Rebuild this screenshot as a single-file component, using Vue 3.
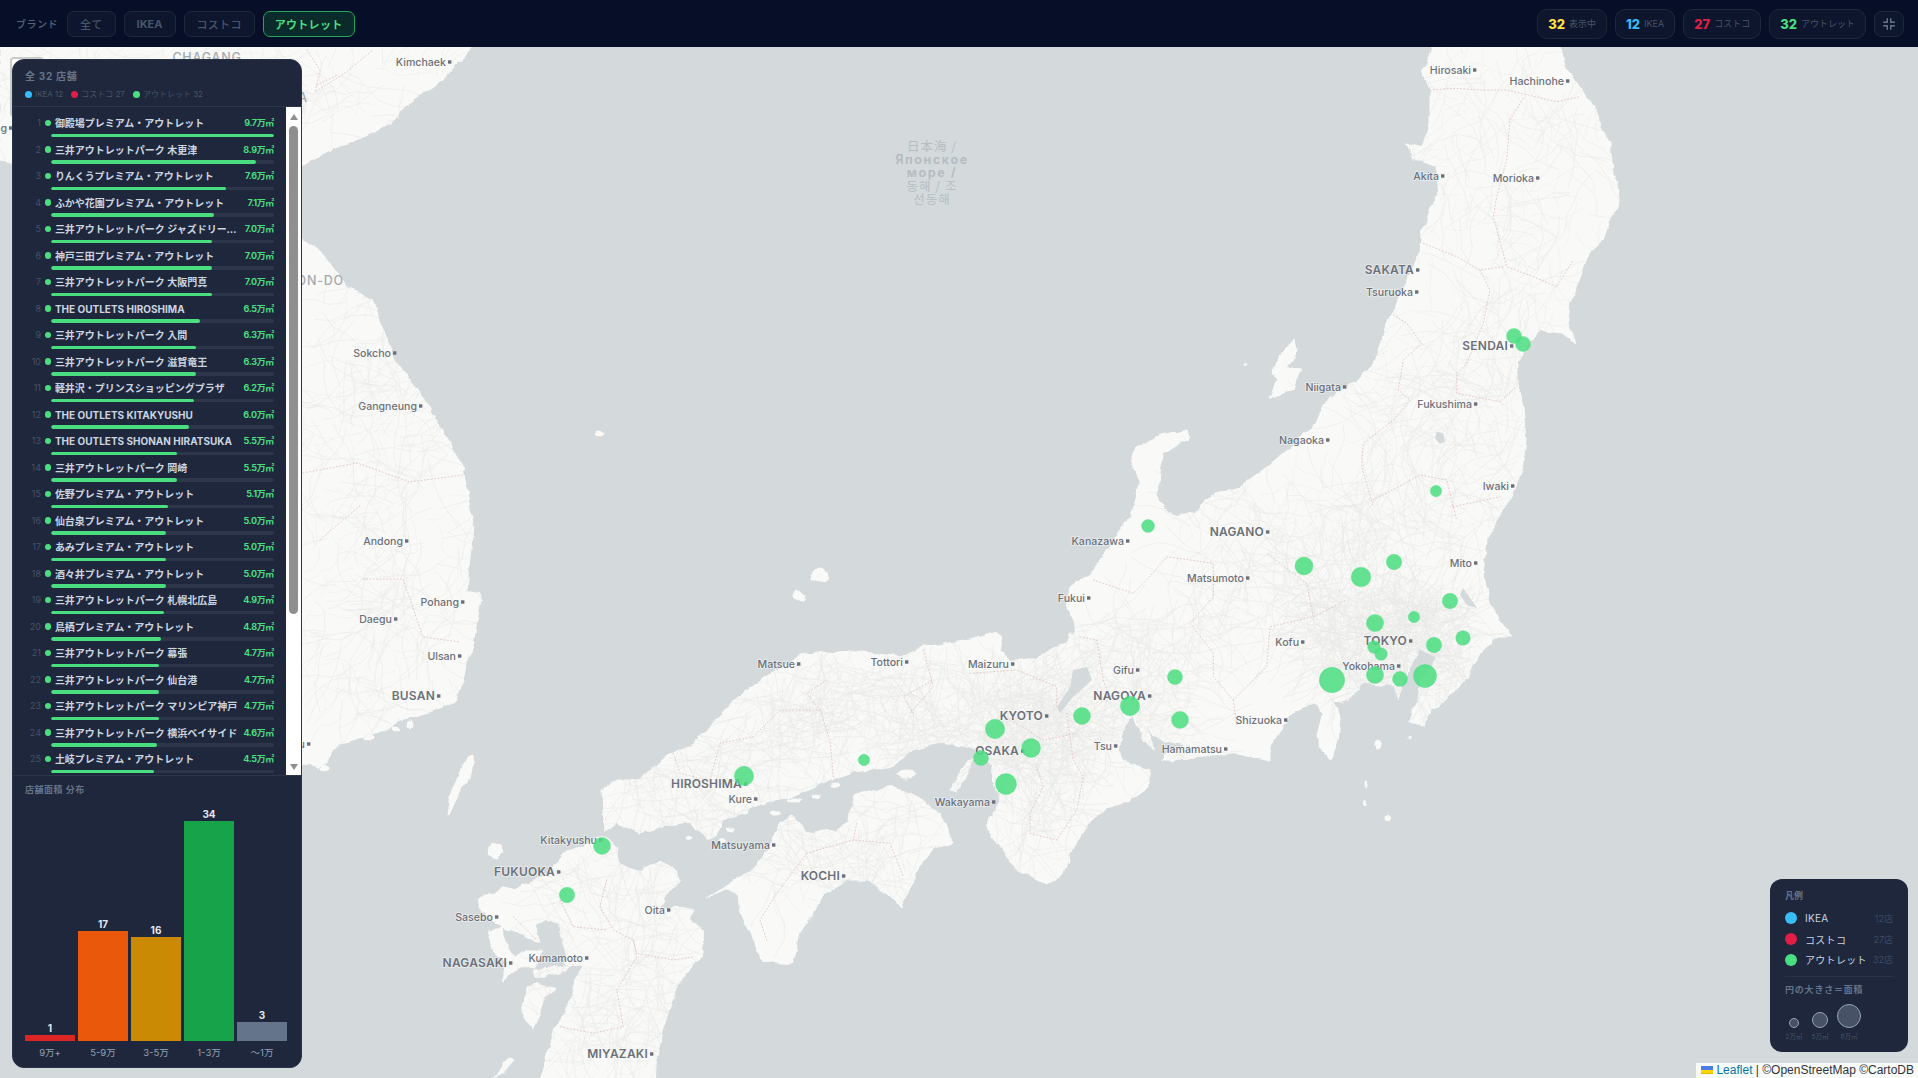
<template>
  <div class="page">
    <header class="topbar">
      <div class="filters">
        <span class="filter-label">ブランド</span>
        <button v-for="b in brands" :key="b" class="filter-btn" :class="{ active: b === activeBrand }">{{ b }}</button>
      </div>
      <div class="stats">
        <div v-for="s in stats" :key="s.label" class="stat">
          <b :class="s.cls">{{ s.num }}</b>
          <span>{{ s.label }}</span>
        </div>
        <button class="icon-btn">
          <svg width="14" height="14" viewBox="0 0 24 24" fill="none" stroke="#64748b" stroke-width="2.6">
            <path d="M2 9h7V2M22 9h-7V2M2 15h7v7M22 15h-7v7" />
          </svg>
        </button>
      </div>
    </header>

    <main class="map">
      <svg class="map-svg" viewBox="0 47 1918 1031" xmlns="http://www.w3.org/2000/svg">
        <defs>
          <clipPath id="land-clip">
            <path v-for="(d, i) in land" :key="i" :d="d" />
          </clipPath>
          <filter id="coast" filterUnits="userSpaceOnUse" x="0" y="0" width="1918" height="1078" color-interpolation-filters="sRGB">
            <feTurbulence type="fractalNoise" baseFrequency="0.07" numOctaves="3" seed="4" result="n" />
            <feDisplacementMap in="SourceGraphic" in2="n" scale="7" xChannelSelector="R" yChannelSelector="G" />
          </filter>
        </defs>
        <rect x="0" y="0" width="1918" height="1078" fill="#d4dadc" />
        <g filter="url(#coast)">
          <path v-for="(d, i) in land" :key="'l' + i" :d="d" class="land" />
          <ellipse v-for="(e, i) in islets" :key="'e' + i" :cx="e[0]" :cy="e[1]" :rx="e[2]" :ry="e[3]" class="islet" />
        </g>
        <g clip-path="url(#land-clip)">
          <path :d="roads" class="roads" />
          <path :d="majorRoads" class="roads-major" />
          <path :d="borders" class="borders" />
        </g>
        <path v-for="(d, i) in lakes" :key="'k' + i" :d="d" class="lake" />

        <g class="sea-label">
          <text x="932" y="151">日本海 /</text>
          <text x="932" y="164" class="ru">Японское</text>
          <text x="932" y="177" class="ru">море /</text>
          <text x="932" y="191">동해 / 조</text>
          <text x="932" y="204">선동해</text>
        </g>
        <text x="207" y="62" class="region">CHAGANG</text>
        <text x="308" y="102" class="region end">HAMGYONGA</text>
        <text x="344" y="285" class="region end">GANGWON-DO</text>

        <g v-for="p in places" :key="p[0]">
          <text :x="p[1]" :y="p[2] + 4" class="place" :class="{ caps: p[0] === p[0].toUpperCase() }">{{ p[0] }}</text>
          <rect :x="p[1] + 2" :y="p[2] - 1.7" width="3.4" height="3.4" class="place-dot" />
        </g>

        <circle v-for="(m, i) in markers" :key="'m' + i" :cx="m[0]" :cy="m[1]" :r="m[2]" class="marker" />
      </svg>

      <div class="zoom-box"></div>

      <aside class="panel">
        <div class="panel-head">
          <div class="panel-title">全 32 店舗</div>
          <div class="panel-legend">
            <span><i class="dot ikea"></i>IKEA 12</span>
            <span><i class="dot costco"></i>コストコ 27</span>
            <span><i class="dot outlet"></i>アウトレット 32</span>
          </div>
        </div>
        <div class="list-wrap">
          <div class="list">
            <div v-for="(r, i) in rows" :key="r.name" class="row">
              <div class="row-top">
                <span class="rank">{{ i + 1 }}</span>
                <i class="row-dot"></i>
                <span class="name">{{ r.name }}</span>
                <span class="value">{{ r.area.toFixed(1) }}万㎡</span>
              </div>
              <div class="track">
                <div class="fill" :style="{ width: (r.area / 9.7) * 100 + '%' }"></div>
              </div>
            </div>
          </div>
          <div class="scrollbar">
            <i class="arrow up"></i>
            <div class="scroll-track"><div class="thumb"></div></div>
            <i class="arrow down"></i>
          </div>
        </div>
        <div class="chart">
          <div class="chart-title">店舗面積 分布</div>
          <div class="bars">
            <div v-for="b in buckets" :key="b.label" class="bar-col">
              <span class="bar-num">{{ b.count }}</span>
              <div class="bar" :class="b.cls" :style="{ height: b.count * 6.47 + 'px' }"></div>
              <span class="bar-label">{{ b.label }}</span>
            </div>
          </div>
        </div>
      </aside>

      <aside class="legend">
        <div class="legend-title">凡例</div>
        <div v-for="l in legend" :key="l.name" class="legend-row">
          <i class="legend-dot" :class="l.cls"></i>
          <span class="legend-name">{{ l.name }}</span>
          <span class="legend-count">{{ l.count }}店</span>
        </div>
        <div class="legend-sub">円の大きさ＝面積</div>
        <div class="sizes">
          <div v-for="s in sizes" :key="s.label" class="size">
            <i class="size-circle" :class="s.cls"></i>
            <span>{{ s.label }}</span>
          </div>
        </div>
      </aside>

      <div class="attribution"><svg width="12" height="8" viewBox="0 0 12 8"><rect width="12" height="4" fill="#4c7be1" /><rect y="4" width="12" height="3" fill="#ffd500" /><rect y="7" width="12" height="1" fill="#e0bc00" /></svg> <a>Leaflet</a> | ©OpenStreetMap ©CartoDB</div>
    </main>
  </div>
</template>

<script setup>
const activeBrand = 'アウトレット'
const brands = ['全て', 'IKEA', 'コストコ', 'アウトレット']

const stats = [
  { num: 32, label: '表示中', cls: 'yellow' },
  { num: 12, label: 'IKEA', cls: 'blue' },
  { num: 27, label: 'コストコ', cls: 'red' },
  { num: 32, label: 'アウトレット', cls: 'green' }
]

const rows = [
  { name: '御殿場プレミアム・アウトレット', area: 9.7 },
  { name: '三井アウトレットパーク 木更津', area: 8.9 },
  { name: 'りんくうプレミアム・アウトレット', area: 7.6 },
  { name: 'ふかや花園プレミアム・アウトレット', area: 7.1 },
  { name: '三井アウトレットパーク ジャズドリーム長島', area: 7.0 },
  { name: '神戸三田プレミアム・アウトレット', area: 7.0 },
  { name: '三井アウトレットパーク 大阪門真', area: 7.0 },
  { name: 'THE OUTLETS HIROSHIMA', area: 6.5 },
  { name: '三井アウトレットパーク 入間', area: 6.3 },
  { name: '三井アウトレットパーク 滋賀竜王', area: 6.3 },
  { name: '軽井沢・プリンスショッピングプラザ', area: 6.2 },
  { name: 'THE OUTLETS KITAKYUSHU', area: 6.0 },
  { name: 'THE OUTLETS SHONAN HIRATSUKA', area: 5.5 },
  { name: '三井アウトレットパーク 岡崎', area: 5.5 },
  { name: '佐野プレミアム・アウトレット', area: 5.1 },
  { name: '仙台泉プレミアム・アウトレット', area: 5.0 },
  { name: 'あみプレミアム・アウトレット', area: 5.0 },
  { name: '酒々井プレミアム・アウトレット', area: 5.0 },
  { name: '三井アウトレットパーク 札幌北広島', area: 4.9 },
  { name: '鳥栖プレミアム・アウトレット', area: 4.8 },
  { name: '三井アウトレットパーク 幕張', area: 4.7 },
  { name: '三井アウトレットパーク 仙台港', area: 4.7 },
  { name: '三井アウトレットパーク マリンピア神戸', area: 4.7 },
  { name: '三井アウトレットパーク 横浜ベイサイド', area: 4.6 },
  { name: '土岐プレミアム・アウトレット', area: 4.5 }
]

const buckets = [
  { label: '9万+', count: 1, cls: 'b-red' },
  { label: '5-9万', count: 17, cls: 'b-orange' },
  { label: '3-5万', count: 16, cls: 'b-amber' },
  { label: '1-3万', count: 34, cls: 'b-green' },
  { label: '〜1万', count: 3, cls: 'b-slate' }
]

const legend = [
  { name: 'IKEA', count: 12, cls: 'ikea' },
  { name: 'コストコ', count: 27, cls: 'costco' },
  { name: 'アウトレット', count: 32, cls: 'outlet' }
]

const sizes = [
  { label: '2万㎡', cls: 's1' },
  { label: '5万㎡', cls: 's2' },
  { label: '8万㎡', cls: 's3' }
]

// x, y, r of each store on the map
const markers = [
  [1436, 491, 5.7], [1304, 566, 9], [1361, 577, 9.8], [1394, 562, 7.7], [1450, 601, 7.7],
  [1375, 623, 8.6], [1414, 617, 5.7], [1434, 645, 7.7], [1463, 638, 7.3], [1374, 647, 6.3],
  [1381, 654, 6.3], [1332, 680, 12.7], [1375, 675, 8.6], [1400, 679, 7.5], [1425, 676, 11.5],
  [1514, 336, 7.5], [1523, 344, 7.5], [1148, 526, 6.5], [1175, 677, 7.5], [1130, 706, 9.7],
  [1180, 720, 8.5], [1082, 716, 8.5], [995, 729, 9.7], [1031, 748, 9.5], [981, 758, 7.5],
  [1006, 784, 10.5], [744, 776, 9.7], [864, 760, 5.7], [602, 846, 8.5], [567, 895, 7.7]
]

// label, right end of text, y of the square
const places = [
  ['Kimchaek', 446, 62], ['Hirosaki', 1471, 70], ['Hachinohe', 1564, 81], ['Akita', 1439, 176],
  ['Morioka', 1534, 178], ['SAKATA', 1414, 270], ['Tsuruoka', 1413, 292], ['SENDAI', 1508, 346],
  ['Niigata', 1341, 387], ['Fukushima', 1472, 404], ['Nagaoka', 1324, 440], ['Iwaki', 1509, 486],
  ['Kanazawa', 1124, 541], ['NAGANO', 1264, 532], ['Matsumoto', 1244, 578], ['Fukui', 1085, 598],
  ['Kofu', 1299, 642], ['Maizuru', 1009, 664], ['Gifu', 1134, 670], ['NAGOYA', 1146, 696],
  ['KYOTO', 1043, 716], ['OSAKA', 1019, 751], ['Tsu', 1112, 746], ['Shizuoka', 1282, 720],
  ['Hamamatsu', 1222, 749], ['Wakayama', 990, 802], ['TOKYO', 1407, 641], ['Yokohama', 1395, 666],
  ['Mito', 1472, 563], ['HIROSHIMA', 742, 784], ['Kure', 752, 799], ['Matsuyama', 770, 845],
  ['KOCHI', 840, 876], ['Oita', 665, 910], ['Kitakyushu', 597, 840], ['FUKUOKA', 555, 872],
  ['Sasebo', 493, 917], ['NAGASAKI', 507, 963], ['Kumamoto', 583, 958], ['MIYAZAKI', 648, 1054],
  ['Matsue', 795, 664], ['Tottori', 903, 662], ['Sokcho', 391, 353], ['Gangneung', 417, 406],
  ['Andong', 403, 541], ['Pohang', 459, 602], ['Daegu', 392, 619], ['Ulsan', 456, 656],
  ['BUSAN', 435, 696], ['Jinju', 305, 744], ['Hanggang', 7, 128]
]

// turns a flat list of screenshot-crop points into a closed path in page coordinates
function poly(ox, oy, sx, sy, pts) {
  let d = ''
  for (let i = 0; i < pts.length; i += 2) {
    d += (i ? 'L' : 'M') + (ox + pts[i] / sx).toFixed(1) + ' ' + (oy + pts[i + 1] / sy).toFixed(1)
  }
  return d + 'Z'
}
function line(ox, oy, sx, sy, pts) {
  return poly(ox, oy, sx, sy, pts).slice(0, -1)
}

const land = [
  // Honshu
  poly(0, 0, 1, 1, [
    1437, 30, 1558, 30, 1565, 67, 1583, 90, 1597, 113, 1602, 130, 1610, 143, 1613, 173, 1618, 187, 1619, 200,
    1612, 217, 1602, 240, 1587, 257, 1580, 277, 1572, 297, 1567, 323, 1575, 343, 1560, 333, 1540, 330, 1530, 340,
    1518, 363, 1518, 387, 1523, 407, 1526, 440, 1522, 470, 1512, 497, 1503, 510, 1487, 540, 1483, 573, 1490, 603,
    1507, 632, 1510, 637, 1497, 637, 1480, 650, 1467, 677, 1450, 697, 1430, 710, 1423, 727, 1410, 720, 1417, 700,
    1420, 680, 1432, 667, 1435, 657, 1420, 650, 1413, 660, 1405, 677, 1398, 700, 1393, 687, 1385, 684, 1363, 683,
    1350, 700, 1333, 702, 1340, 720, 1338, 740, 1332, 760, 1322, 753, 1318, 737, 1323, 713, 1315, 703, 1300, 707,
    1287, 720, 1270, 747, 1270, 760, 1253, 757, 1233, 753, 1193, 757, 1163, 762, 1170, 752, 1187, 745, 1160, 740,
    1153, 735, 1148, 722, 1152, 748, 1143, 740, 1133, 713, 1123, 730, 1117, 750, 1127, 763, 1150, 770, 1150, 787,
    1130, 800, 1107, 807, 1090, 823, 1073, 847, 1063, 873, 1047, 885, 1017, 870, 1007, 857, 987, 830, 990, 817,
    1000, 800, 997, 790, 990, 763, 980, 750, 970, 748, 943, 742, 913, 750, 887, 768, 860, 770, 837, 777,
    813, 787, 790, 797, 760, 803, 743, 813, 723, 820, 717, 837, 707, 837, 690, 823, 660, 827, 640, 833, 617, 823,
    607, 833, 603, 813, 602, 790, 613, 780, 637, 780, 667, 755, 693, 743, 717, 720, 743, 693, 762, 680, 800, 655,
    850, 650, 900, 657, 923, 647, 950, 643, 970, 640, 997, 632, 1003, 637, 1000, 650, 1010, 660, 1033, 660,
    1053, 647, 1067, 643, 1070, 633, 1077, 633, 1073, 620, 1067, 607, 1070, 587, 1090, 573, 1107, 550, 1130, 517,
    1140, 480, 1132, 465, 1135, 450, 1150, 440, 1165, 435, 1187, 430, 1190, 438, 1165, 452, 1160, 470, 1158, 500,
    1175, 517, 1198, 510, 1215, 493, 1240, 487, 1260, 473, 1283, 453, 1310, 430, 1330, 397, 1357, 380, 1377, 360,
    1383, 333, 1397, 300, 1417, 260, 1423, 230, 1437, 190, 1437, 167, 1413, 158, 1405, 143, 1423, 148, 1430, 123,
    1430, 90, 1422, 70, 1432, 50
  ]),
  // Sado
  poly(0, 0, 1, 1, [1295, 338, 1297, 350, 1287, 370, 1302, 368, 1293, 387, 1270, 398, 1277, 380, 1272, 373, 1278, 357]),
  // Awaji
  poly(0, 0, 1, 1, [975, 757, 967, 773, 957, 793, 950, 790, 955, 780, 963, 767]),
  // Shikoku
  poly(0, 0, 1, 1, [
    707, 897, 737, 880, 757, 867, 773, 840, 780, 823, 793, 815, 803, 830, 813, 832, 837, 830, 850, 820, 853, 797,
    887, 787, 913, 793, 940, 813, 947, 833, 952, 843, 933, 850, 917, 870, 902, 908, 887, 893, 867, 880, 850, 880,
    823, 893, 813, 913, 800, 933, 793, 963, 773, 963, 762, 960, 753, 937, 740, 913, 738, 893, 727, 888
  ]),
  // Kyushu
  poly(460, 680, 3, 3, [
    430, 470, 470, 500, 480, 550, 540, 575, 600, 545, 650, 570, 660, 610, 610, 650, 600, 680, 700, 685, 690, 720,
    730, 750, 730, 830, 680, 880, 640, 950, 610, 1040, 590, 1130, 585, 1210, 240, 1210, 280, 1050, 320, 1000,
    345, 900, 370, 860, 310, 850, 320, 830, 305, 790, 295, 730, 255, 715, 225, 735, 240, 785, 190, 765, 130, 745,
    85, 715, 65, 680, 55, 650, 100, 645, 130, 620, 165, 630, 250, 590, 300, 545, 320, 510, 370, 500, 400, 480
  ]),
  poly(460, 680, 3, 3, [85, 750, 130, 745, 135, 790, 165, 830, 205, 810, 245, 810, 225, 860, 180, 860, 125, 905, 145, 850, 105, 820]),
  poly(460, 680, 3, 3, [300, 860, 345, 850, 300, 880, 225, 895, 220, 870]),
  poly(460, 680, 3, 3, [200, 920, 240, 915, 285, 925, 250, 960, 240, 1000, 215, 1040, 185, 985]),
  poly(460, 680, 3, 3, [150, 1130, 165, 1140, 130, 1180, 100, 1200]),
  poly(460, 680, 3, 3, [95, 490, 125, 495, 128, 520, 105, 535, 88, 520]),
  // Tsushima
  poly(0, 0, 1, 1, [468, 756, 475, 754, 470, 778, 460, 792, 453, 806, 447, 813, 450, 795, 458, 773]),
  // Korea south
  poly(0, 0, 1, 1, [
    20, 240, 300, 240, 320, 250, 343, 283, 372, 300, 393, 356, 433, 414, 463, 468, 473, 526, 467, 589, 482, 596,
    473, 642, 457, 700, 433, 712, 400, 720, 380, 734, 340, 744, 320, 768, 300, 763, 20, 760
  ]),
  // Korea north
  poly(0, 0, 1, 1, [0, 30, 480, 30, 473, 46, 447, 75, 400, 109, 397, 119, 367, 136, 333, 148, 310, 162, 300, 167, 60, 170, 0, 160])
]

const islets = [
  [820, 575, 8, 7], [799, 596, 6, 4], [600, 433, 4, 3], [1377, 745, 3, 5], [1388, 817, 2, 3], [1365, 803, 1.5, 3],
  [1366, 785, 1, 2], [907, 774, 9, 4], [775, 812, 6, 2], [795, 800, 7, 2], [815, 795, 4, 2], [835, 785, 4, 2],
  [745, 812, 3, 2], [730, 830, 4, 2], [722, 842, 3, 1.5], [690, 838, 3, 1.5], [345, 740, 5, 3], [370, 738, 4, 3],
  [395, 730, 4, 3], [325, 768, 3, 3], [410, 725, 3, 4], [1410, 738, 1, 2], [1245, 365, 1, 1.5], [1390, 325, 1.5, 1]
]

const lakes = [
  poly(0, 0, 1, 1, [1073, 670, 1087, 667, 1092, 680, 1073, 697, 1060, 713, 1057, 707, 1070, 687]),
  poly(0, 0, 1, 1, [1463, 588, 1477, 608, 1467, 605, 1460, 595]),
  poly(1240, 40, 3, 3, [590, 1175, 610, 1180, 615, 1205, 600, 1212, 585, 1195])
]

const borders = [
  line(1240, 40, 3, 3, [570, 150, 640, 145, 720, 150, 800, 150, 950, 185, 1020, 170]),
  line(1240, 40, 3, 3, [850, 175, 810, 240, 800, 360, 770, 470, 760, 530, 790, 640, 800, 680, 880, 710, 950, 740, 1000, 660]),
  line(1240, 40, 3, 3, [550, 610, 650, 650, 720, 690, 790, 680]),
  line(1240, 40, 3, 3, [720, 690, 750, 750, 730, 850, 680, 970, 650, 1000, 650, 1060, 780, 1085, 830, 1040]),
  line(1240, 40, 3, 3, [460, 825, 500, 850, 545, 910, 490, 960, 475, 1050, 510, 1080, 460, 1140, 370, 1210, 365, 1280, 400, 1400]),
  line(1240, 40, 3, 3, [400, 1380, 540, 1305, 620, 1320, 650, 1440]),
  line(1240, 40, 3, 3, [640, 1400, 780, 1370]),
  line(900, 500, 3, 3, [70, 450, 100, 560, 30, 640]),
  line(900, 500, 3, 3, [210, 520, 350, 510, 470, 560, 470, 620]),
  line(900, 500, 3, 3, [540, 410, 590, 420, 610, 540, 620, 570]),
  line(900, 500, 3, 3, [580, 240, 700, 280, 740, 240, 800, 170, 940, 190, 940, 290, 870, 370, 940, 460, 940, 530, 1000, 600, 1100, 500, 1110, 380, 1240, 350, 1340, 300]),
  line(900, 500, 3, 3, [1000, 600, 1010, 680]),
  line(900, 500, 3, 3, [1240, 350, 1220, 250, 1180, 220, 1100, 160]),
  line(900, 500, 3, 3, [500, 640, 520, 780, 550, 830, 530, 930, 470, 1020, 390, 1000, 390, 940, 430, 860, 410, 800]),
  line(900, 500, 3, 3, [530, 700, 430, 720, 300, 640]),
  line(460, 680, 3, 3, [750, 300, 780, 190, 880, 170, 960, 90, 1080, 90, 1110, 180, 1120, 290]),
  line(460, 680, 3, 3, [1080, 90, 1040, 40, 1100, 0]),
  line(460, 680, 3, 3, [1360, 100, 1330, 50, 1420, 0]),
  line(460, 680, 3, 3, [640, 220, 660, 280, 740, 300]),
  line(460, 680, 3, 3, [1040, 520, 1180, 480, 1290, 490, 1330, 590]),
  line(460, 680, 3, 3, [1190, 430, 1180, 480]),
  line(460, 680, 3, 3, [1040, 520, 950, 640, 900, 720, 920, 780]),
  line(460, 680, 3, 3, [440, 600, 420, 680, 460, 750, 520, 780, 530, 820, 640, 840, 700, 830]),
  line(460, 680, 3, 3, [520, 780, 530, 830, 470, 930, 490, 1040, 400, 1060, 300, 1040]),
  line(460, 680, 3, 3, [300, 660, 340, 740, 440, 750]),
  line(460, 680, 3, 3, [160, 710, 240, 790]),
  line(0, 0, 1, 1, [303, 473, 357, 463, 410, 482, 463, 475]),
  line(0, 0, 1, 1, [320, 540, 330, 531, 360, 506]),
  line(0, 0, 1, 1, [363, 579, 403, 579, 423, 637, 460, 642]),
  line(0, 0, 1, 1, [307, 50, 320, 70, 315, 92, 345, 73, 373, 50]),
  line(0, 0, 1, 1, [317, 85, 337, 75])
].join('')

// faint road texture, seeded so that every run draws the same network
let seed = 20240
function rnd() {
  seed = (seed * 16807) % 2147483647
  return seed / 2147483647
}
function walks(hubs, len, steps) {
  let d = ''
  for (const [cx, cy, sx, sy, n] of hubs) {
    for (let i = 0; i < n; i++) {
      let x = cx + (rnd() - 0.5) * 2 * sx
      let y = cy + (rnd() - 0.5) * 2 * sy
      let dir = rnd() * 6.28
      d += 'M' + x.toFixed(1) + ' ' + y.toFixed(1)
      for (let s = 0; s < steps; s++) {
        dir += (rnd() - 0.5) * 1.1
        const l = len * (0.5 + rnd())
        x += Math.cos(dir) * l
        y += Math.sin(dir) * l
        d += 'L' + x.toFixed(1) + ' ' + y.toFixed(1)
      }
    }
  }
  return d
}
const hubs = [
  [1510, 240, 90, 190, 130], [1430, 450, 80, 100, 110], [1300, 560, 110, 80, 150], [1390, 640, 70, 50, 260],
  [1130, 690, 70, 70, 160], [1020, 730, 50, 50, 170], [1040, 810, 40, 50, 40], [860, 710, 100, 50, 150],
  [700, 780, 80, 40, 90], [850, 850, 80, 40, 80], [610, 950, 70, 120, 150], [380, 500, 80, 220, 180],
  [200, 90, 280, 40, 80]
]
const roads = walks(hubs, 7, 6)
const majorRoads = walks(hubs, 14, 5)
</script>

<style>
html,
body {
  margin: 0;
  padding: 0;
  overflow: hidden;
  background: #d4dadc;
}
</style>

<style scoped>
.page {
  width: 100vw;
  height: 100vh;
  display: flex;
  flex-direction: column;
  font-family: Inter, "Noto Sans CJK JP", sans-serif;
  overflow: hidden;
}

.topbar {
  height: 47px;
  flex: none;
  background: #060f27;
  display: flex;
  align-items: center;
  justify-content: space-between;
  padding: 0 14px 0 16px;
  box-sizing: border-box;
}

.filters {
  display: flex;
  align-items: center;
  gap: 8px;
}

.filter-label {
  font-size: 10px;
  color: #566478;
  margin-right: 1px;
  font-weight: 500;
  letter-spacing: 0.5px;
}

.filter-btn {
  height: 26px;
  padding: 0 12px;
  border-radius: 7px;
  border: 1px solid #1e293b;
  background: #0d162c;
  color: #475569;
  font-family: inherit;
  font-size: 11px;
  font-weight: 500;
  letter-spacing: 0.3px;
}

.filter-btn:nth-child(3) {
  font-weight: 700;
  letter-spacing: 0;
}

.filter-btn.active {
  background: #0b2b2b;
  border-color: #22a565;
  color: #4ade80;
  font-weight: 700;
  padding: 0 11px;
}

.stats {
  display: flex;
  align-items: center;
  gap: 8px;
}

.stat {
  height: 30px;
  box-sizing: border-box;
  padding: 0 10px;
  border: 1px solid #1e293b;
  border-radius: 10px;
  background: #0d162c;
  display: flex;
  align-items: center;
  gap: 4px;
}

.stat b {
  font-size: 13px;
  font-weight: 800;
}

.stat span {
  font-size: 9px;
  color: #475569;
}

.yellow { color: #fde047; }
.blue { color: #38bdf8; }
.red { color: #e11d48; }
.green { color: #4ade80; }

.icon-btn {
  width: 30px;
  height: 26px;
  padding: 0;
  border: 1px solid #1e293b;
  border-radius: 8px;
  background: #0d162c;
  display: flex;
  align-items: center;
  justify-content: center;
}

.map {
  flex: 1;
  position: relative;
  overflow: hidden;
}

.map-svg {
  display: block;
  width: 100%;
  height: 100%;
}

.land,
.islet {
  fill: #f9f9f7;
  stroke: #f9f9f7;
  stroke-width: 1;
  stroke-linejoin: round;
}

.lake {
  fill: #d4dadc;
}

.roads {
  fill: none;
  stroke: #ececea;
  stroke-width: 0.5;
}

.roads-major {
  fill: none;
  stroke: #e9e9e7;
  stroke-width: 0.6;
}

.borders {
  fill: none;
  stroke: #e3c9c9;
  stroke-width: 1;
  stroke-dasharray: 1 2.4;
  stroke-linecap: round;
}

.sea-label text {
  font-family: "Noto Sans CJK JP", sans-serif;
  font-size: 12.5px;
  fill: #b6bdc2;
  text-anchor: middle;
  letter-spacing: 1px;
}

.sea-label text.ru {
  font-family: Inter, sans-serif;
  font-weight: 700;
  font-size: 12.5px;
  letter-spacing: 1.6px;
}

.region {
  font-size: 12.5px;
  font-weight: 500;
  fill: #a3a9af;
  text-anchor: middle;
  letter-spacing: 0.8px;
}

.region.end {
  text-anchor: end;
}

.place {
  font-size: 10.6px;
  font-weight: 500;
  fill: #6b7079;
  text-anchor: end;
  stroke: rgba(255, 255, 255, 0.55);
  stroke-width: 1.5px;
  paint-order: stroke;
}

.place.caps {
  font-size: 12px;
  font-weight: 600;
  letter-spacing: 0.2px;
}

.place-dot {
  fill: #6b7079;
}

.marker {
  fill: #4ade80;
  fill-opacity: 0.85;
  stroke: #4ade80;
  stroke-opacity: 0.6;
  stroke-width: 0.6;
}

.zoom-box {
  position: absolute;
  left: 10px;
  top: 10px;
  width: 34px;
  height: 60px;
  background: #fff;
  border: 2px solid rgba(0, 0, 0, 0.2);
  border-radius: 4px;
  box-sizing: border-box;
}

.panel {
  position: absolute;
  left: 12px;
  top: 12px;
  width: 290px;
  height: 1009px;
  box-sizing: border-box;
  background: #1e273b;
  border: 1px solid #2a3448;
  border-radius: 12px;
  display: flex;
  flex-direction: column;
  overflow: hidden;
}

.panel-head {
  height: 47px;
  flex: none;
  box-sizing: border-box;
  padding: 9px 12px 0;
  border-bottom: 1px solid #2d3749;
}

.panel-title {
  font-size: 10px;
  font-weight: 700;
  color: #64748b;
  letter-spacing: 0.7px;
  line-height: 14px;
}

.panel-legend {
  margin-top: 5px;
  display: flex;
  gap: 8px;
  font-size: 8px;
  color: #475569;
  line-height: 12px;
}

.panel-legend span {
  display: flex;
  align-items: center;
  gap: 3px;
}

.dot {
  display: inline-block;
  width: 7px;
  height: 7px;
  border-radius: 50%;
}

.ikea { background: #38bdf8; }
.costco { background: #e11d48; }
.outlet { background: #4ade80; }

.list-wrap {
  height: 668px;
  flex: none;
  display: flex;
}

.list {
  flex: 1;
  min-width: 0;
  box-sizing: border-box;
  padding-top: 9px;
  overflow: hidden;
}

.scrollbar {
  width: 15px;
  flex: none;
  background: #fff;
  display: flex;
  flex-direction: column;
  align-items: center;
}

.arrow {
  width: 0;
  height: 0;
  flex: none;
  border-left: 4.5px solid transparent;
  border-right: 4.5px solid transparent;
}

.arrow.up {
  margin: 7px 0 4px;
  border-bottom: 6px solid #8f8f8f;
}

.arrow.down {
  margin: 4px 0 5px;
  border-top: 6px solid #8f8f8f;
}

.scroll-track {
  flex: 1;
  width: 100%;
  display: flex;
  justify-content: center;
}

.thumb {
  width: 9px;
  height: 488px;
  margin-top: 2px;
  background: #8f8f8f;
  border-radius: 5px;
}

.row {
  height: 26.5px;
  box-sizing: border-box;
  padding: 0 12px 0 8px;
}

.row-top {
  height: 14px;
  display: flex;
  align-items: center;
  line-height: 14px;
}

.rank {
  width: 20px;
  flex: none;
  text-align: right;
  font-size: 9px;
  color: #45536a;
}

.row-dot {
  width: 6.5px;
  height: 6.5px;
  flex: none;
  border-radius: 50%;
  background: #4ade80;
  margin: 0 3.7px;
}

.name {
  flex: 1;
  min-width: 0;
  font-size: 10px;
  font-weight: 700;
  color: #cbd5e1;
  white-space: nowrap;
  overflow: hidden;
  text-overflow: ellipsis;
}

.value {
  flex: none;
  margin-left: 4px;
  font-size: 9px;
  font-weight: 700;
  color: #4ade80;
  letter-spacing: -0.35px;
}

.track {
  height: 3.7px;
  margin: 3.5px 0 0 30px;
  background: #2d3749;
  border-radius: 2px;
  overflow: hidden;
}

.fill {
  height: 100%;
  background: #4ade80;
  border-radius: 2px;
}

.chart {
  flex: 1;
  min-height: 0;
  display: flex;
  flex-direction: column;
  padding: 8px 14px 0 12px;
  border-top: 1px solid #2d3749;
}

.chart-title {
  font-size: 9px;
  font-weight: 700;
  color: #64748b;
  letter-spacing: 0.5px;
  line-height: 12px;
}

.bars {
  flex: 1;
  display: flex;
  align-items: flex-end;
  gap: 3px;
  padding-bottom: 8px;
}

.bar-col {
  flex: 1;
  display: flex;
  flex-direction: column;
  align-items: center;
}

.bar-num {
  font-size: 10px;
  font-weight: 700;
  color: #e2e8f0;
  line-height: 13px;
}

.bar {
  width: 100%;
}

.bar-label {
  margin-top: 6px;
  font-size: 9.5px;
  color: #94a3b8;
  line-height: 12px;
}

.b-red { background: #dc2626; }
.b-orange { background: #ea580c; }
.b-amber { background: #ca8a04; }
.b-green { background: #16a34a; }
.b-slate { background: #64748b; }

.legend {
  position: absolute;
  right: 10px;
  bottom: 26px;
  width: 138px;
  height: 173px;
  box-sizing: border-box;
  padding: 11px 15px;
  background: #1e273b;
  border-radius: 12px;
}

.legend-title {
  font-size: 9px;
  font-weight: 700;
  color: #64748b;
  line-height: 12px;
  margin-bottom: 6px;
}

.legend-row {
  height: 20.7px;
  display: flex;
  align-items: center;
}

.legend-dot {
  width: 12px;
  height: 12px;
  border-radius: 50%;
  margin-right: 8px;
  flex: none;
}

.legend-name {
  flex: 1;
  font-size: 10px;
  color: #cbd5e1;
  letter-spacing: 0.3px;
}

.legend-count {
  font-size: 9px;
  color: #3e4c63;
}

.legend-sub {
  margin-top: 6px;
  padding-top: 7px;
  border-top: 1px solid #2a3448;
  font-size: 9px;
  font-weight: 700;
  color: #64748b;
  letter-spacing: 0.8px;
  line-height: 12px;
}

.sizes {
  display: flex;
  align-items: flex-end;
  gap: 6px;
  margin-top: 8px;
  margin-left: -1px;
}

.size {
  display: flex;
  flex-direction: column;
  align-items: center;
  gap: 3px;
  font-size: 6.5px;
  color: #475569;
  width: 20px;
}

.size:last-child {
  width: 26px;
}

.size-circle {
  display: block;
  box-sizing: border-box;
  border-radius: 50%;
  background: rgba(148, 163, 184, 0.35);
  border: 1px solid #94a3b8;
}

.s1 { width: 10px; height: 10px; }
.s2 { width: 16px; height: 16px; }
.s3 { width: 24px; height: 24px; }

.attribution {
  position: absolute;
  right: 0;
  bottom: 0;
  height: 15px;
  line-height: 15px;
  padding: 0 4px 0 5px;
  background: rgba(255, 255, 255, 0.85);
  font-family: "Liberation Sans", Arial, sans-serif;
  font-size: 12px;
  color: #333;
  white-space: nowrap;
}

.attribution a {
  color: #0078a8;
}
</style>
